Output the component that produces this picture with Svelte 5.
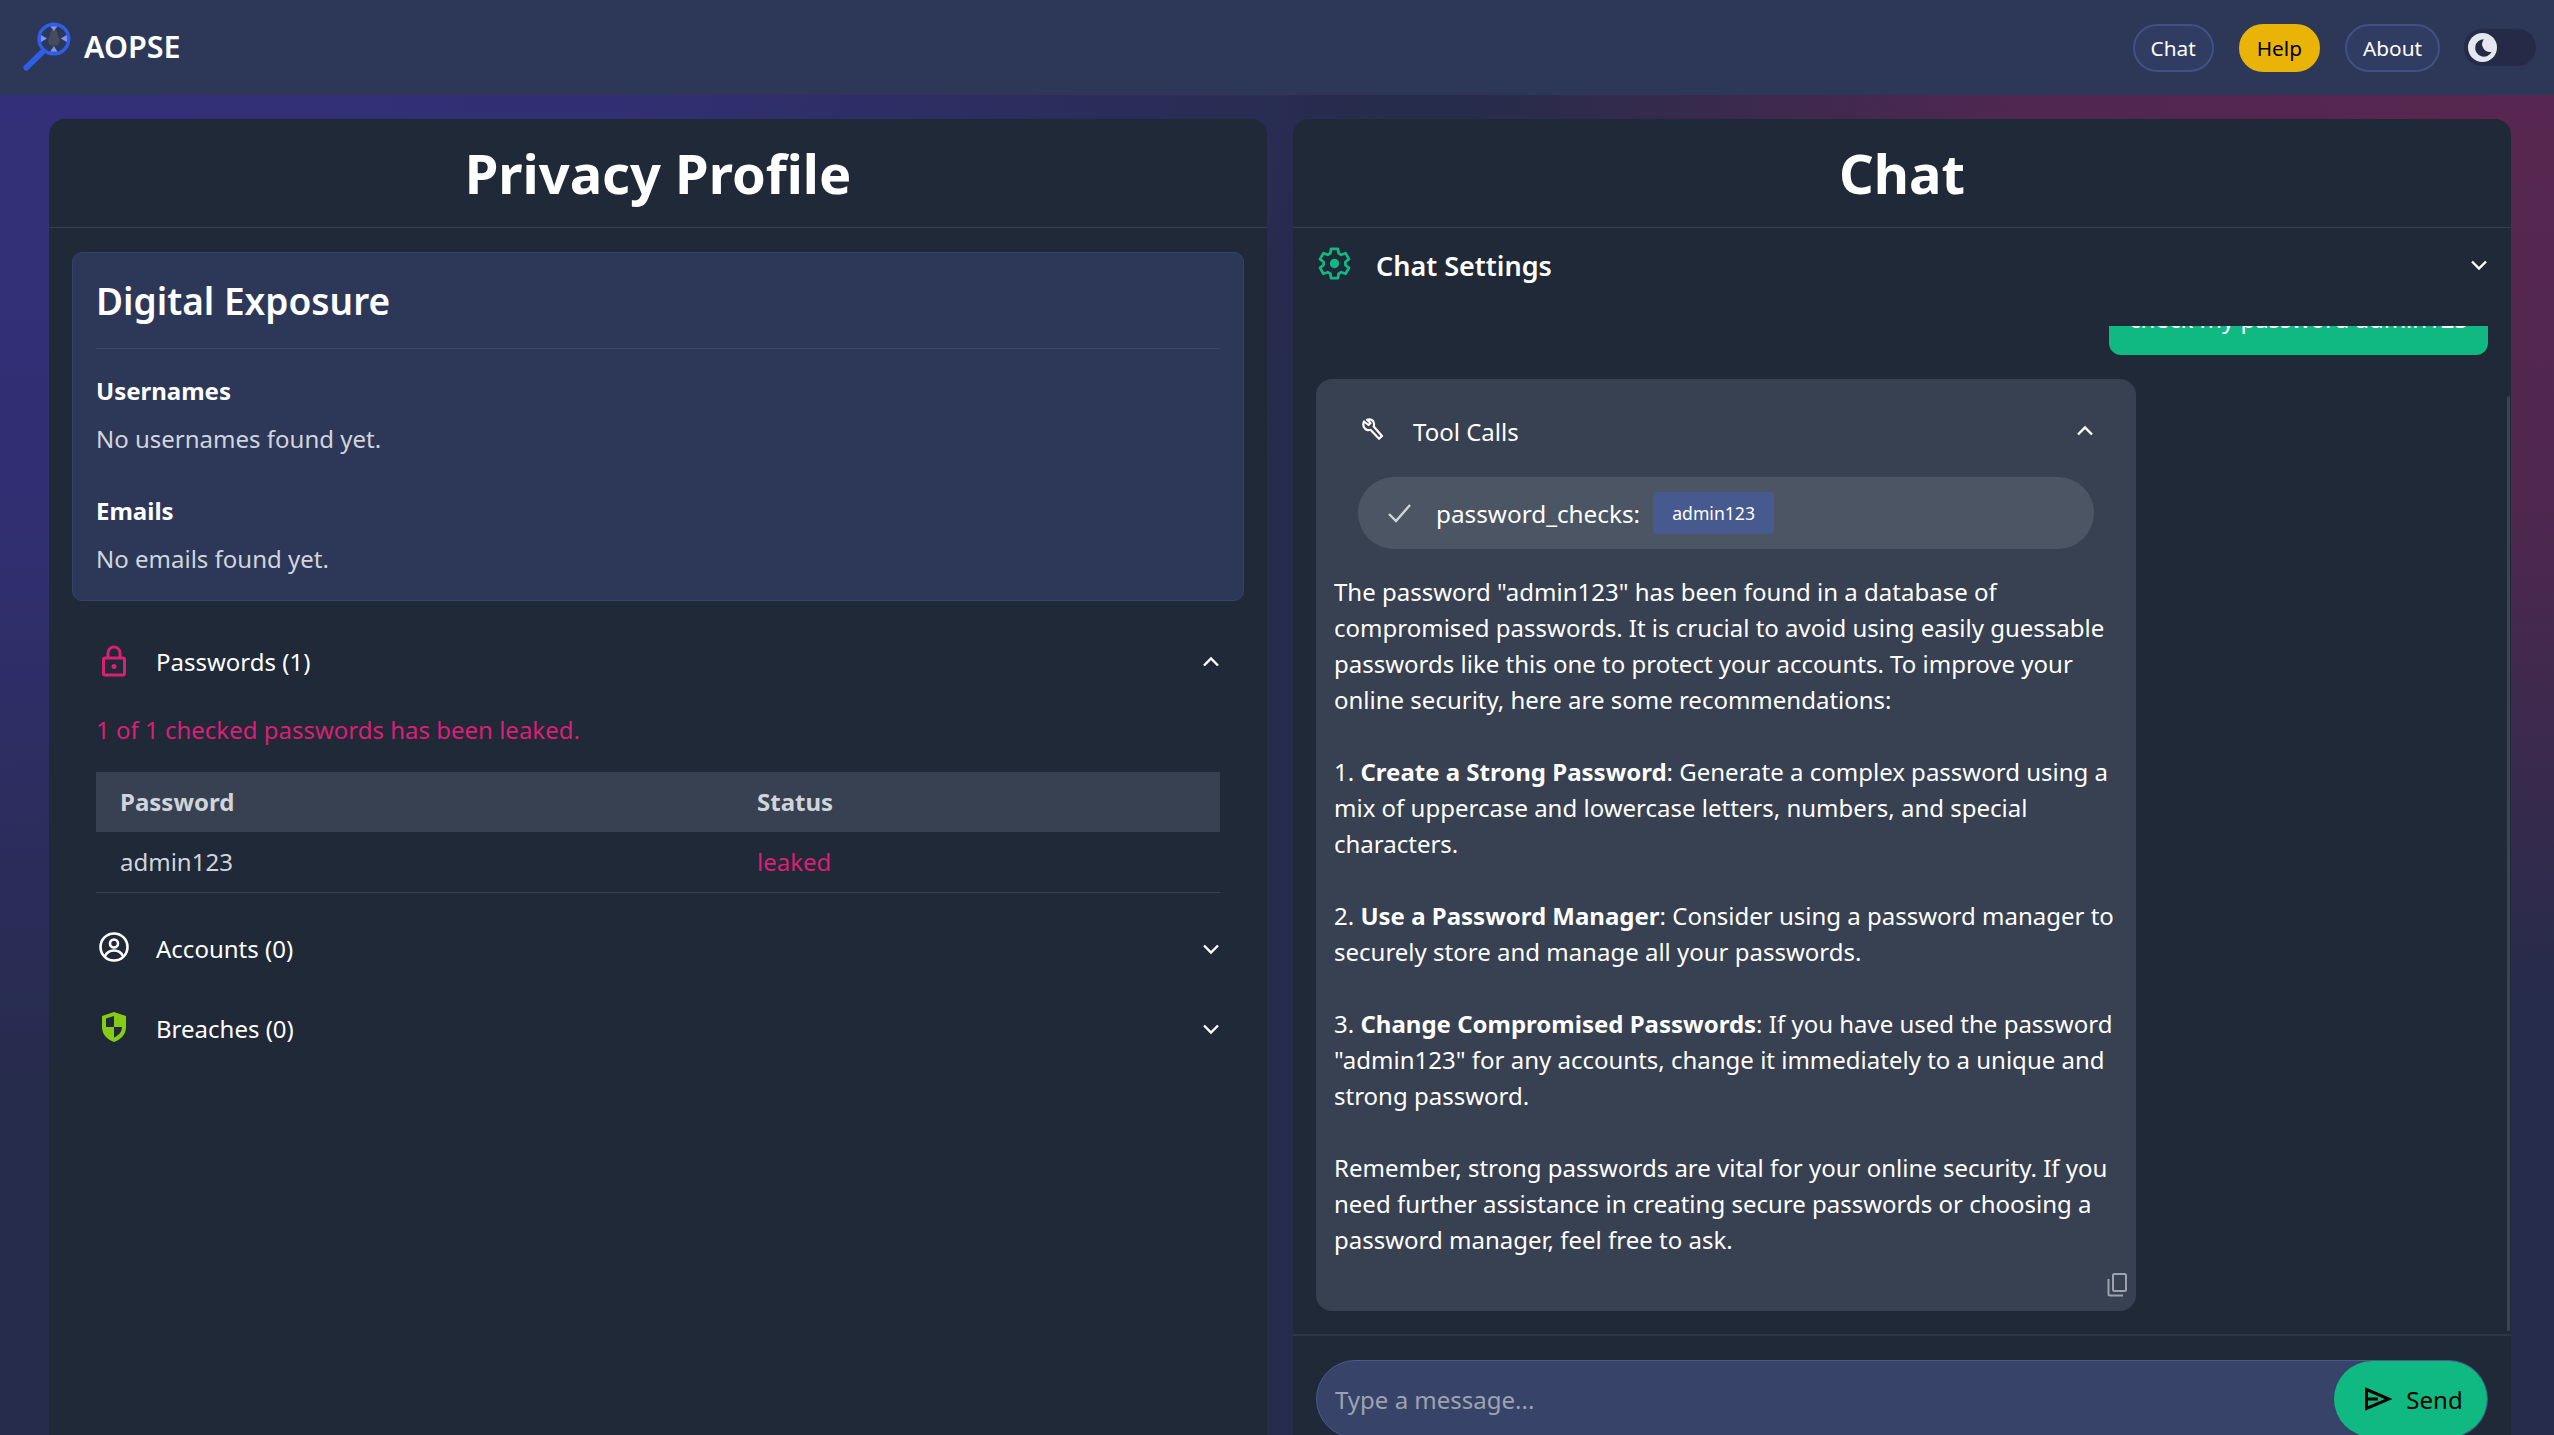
<script>
  const paragraphs = [
    ['The password "admin123" has been found in a database of compromised passwords. It is crucial to avoid using easily guessable passwords like this one to protect your accounts. To improve your online security, here are some recommendations:'],
    ['1. ', 'Create a Strong Password', ': Generate a complex password using a mix of uppercase and lowercase letters, numbers, and special characters.'],
    ['2. ', 'Use a Password Manager', ': Consider using a password manager to securely store and manage all your passwords.'],
    ['3. ', 'Change Compromised Passwords', ': If you have used the password "admin123" for any accounts, change it immediately to a unique and strong password.'],
    ['Remember, strong passwords are vital for your online security. If you need further assistance in creating secure passwords or choosing a password manager, feel free to ask.']
  ];

  // Six-toothed cog outline, teeth pointing up, down and to the four diagonals.
  function cogPath() {
    const pts = [];
    for (let i = 0; i < 6; i++) {
      const a = -90 + i * 60;
      for (const [off, r] of [[-22, 8], [-13, 11], [13, 11], [22, 8]]) {
        const t = ((a + off) * Math.PI) / 180;
        pts.push(`${(12 + r * Math.cos(t)).toFixed(2)} ${(12 + r * Math.sin(t)).toFixed(2)}`);
      }
    }
    return 'M' + pts.join('L') + 'Z';
  }
  const cog = cogPath();
</script>

<div class="page">
  <nav class="navbar">
    <div class="brand">
      <svg class="logo" viewBox="0 0 50 50" width="53" height="53" aria-hidden="true">
        <line x1="5" y1="44" x2="20" y2="29.500" stroke="#2f5fe8" stroke-width="5.500" stroke-linecap="round"/>
        <path d="M31 8c-2.600 0-3.600 3-3.600 5l-2 6 2 4h7.200l2-4-2-6c0-2-1-5-3.600-5z" fill="#454c5e"/>
        <polygon points="27.500,5 34.500,5 31,9.500" fill="#7b94f5"/>
        <polygon points="27.500,29 34.500,29 31,23.500" fill="#7b94f5"/>
        <polygon points="18.500,13 18.500,20 24.500,16.500" fill="#7b94f5"/>
        <polygon points="43.500,13 43.500,20 37.500,16.500" fill="#7b94f5"/>
        <circle cx="31" cy="17" r="14" fill="none" stroke="#2f5fe8" stroke-width="3.200"/>
      </svg>
      <span class="brand-name">AOPSE</span>
    </div>
    <div class="nav-actions">
      <button class="nav-btn">Chat</button>
      <button class="nav-btn help">Help</button>
      <button class="nav-btn">About</button>
      <div class="toggle">
        <span class="knob">
          <svg viewBox="0 0 24 24" width="22" height="22" aria-hidden="true"><path d="M13 2.500a9.500 9.500 0 1 0 8.500 13.600A8.500 8.500 0 0 1 13 2.500z" fill="#252b47"/></svg>
        </span>
      </div>
    </div>
  </nav>

  <main class="main">
    <section class="panel">
      <header class="panel-head"><h1>Privacy Profile</h1></header>
      <div class="profile-body">
        <div class="exposure">
          <h2>Digital Exposure</h2>
          <h3>Usernames</h3>
          <p>No usernames found yet.</p>
          <h3 class="second">Emails</h3>
          <p>No emails found yet.</p>
        </div>

        <div class="acc-row first">
          <svg class="acc-icon" viewBox="0 0 30 32" width="30" height="32" aria-hidden="true">
            <rect x="4.500" y="13" width="21" height="17" rx="1.500" fill="none" stroke="#db1f75" stroke-width="3"/>
            <path d="M9 13V8a6 6 0 0 1 12 0v5" fill="none" stroke="#db1f75" stroke-width="3"/>
            <circle cx="15" cy="21.500" r="2.500" fill="#db1f75"/>
          </svg>
          <span class="acc-label">Passwords (1)</span>
          <svg class="chev" viewBox="0 0 18 12" width="18" height="12" aria-hidden="true"><path d="M2 9.500l7-7 7 7" fill="none" stroke="#fff" stroke-width="2.400"/></svg>
        </div>
        <div class="acc-content">
          <p class="leak">1 of 1 checked passwords has been leaked.</p>
          <table>
            <thead><tr><th class="col-a">Password</th><th>Status</th></tr></thead>
            <tbody><tr><td>admin123</td><td class="leaked">leaked</td></tr></tbody>
          </table>
        </div>
        <div class="acc-row accounts">
          <svg class="acc-icon" viewBox="0 0 30 30" width="30" height="30" aria-hidden="true">
            <circle cx="15" cy="15" r="13.500" fill="none" stroke="#fff" stroke-width="2.600"/>
            <circle cx="15" cy="11.500" r="4" fill="none" stroke="#fff" stroke-width="2.600"/>
            <path d="M6 24c2-4 5.500-5.500 9-5.500s7 1.500 9 5.500" fill="none" stroke="#fff" stroke-width="2.600"/>
          </svg>
          <span class="acc-label">Accounts (0)</span>
          <svg class="chev" viewBox="0 0 18 12" width="18" height="12" aria-hidden="true"><path d="M2 2.500l7 7 7-7" fill="none" stroke="#fff" stroke-width="2.400"/></svg>
        </div>
        <div class="acc-row breaches">
          <svg class="acc-icon" viewBox="0 0 30 30" width="30" height="30" aria-hidden="true">
            <path d="M15 0l12 4v11c0 7.500-5.500 12.500-12 15C8.500 27.500 3 22.500 3 15V4z" fill="#84cc16"/>
            <path d="M15 4v11H7V6.500zM15 15h8c0 5-3.500 8.500-8 10.500z" fill="#1f2937"/>
          </svg>
          <span class="acc-label">Breaches (0)</span>
          <svg class="chev" viewBox="0 0 18 12" width="18" height="12" aria-hidden="true"><path d="M2 2.500l7 7 7-7" fill="none" stroke="#fff" stroke-width="2.400"/></svg>
        </div>
      </div>
    </section>

    <section class="panel">
      <header class="panel-head"><h1>Chat</h1></header>
      <div class="settings">
        <svg class="gear" viewBox="0 0 24 24" width="33" height="33" aria-hidden="true">
          <path d={cog} fill="none" stroke="#10b981" stroke-width="2" stroke-linejoin="round"/>
          <circle cx="12" cy="12" r="3.400" fill="#10b981"/>
        </svg>
        <span class="settings-label">Chat Settings</span>
        <svg class="chev" viewBox="0 0 18 12" width="18" height="12" aria-hidden="true"><path d="M2 2.500l7 7 7-7" fill="none" stroke="#fff" stroke-width="2.400"/></svg>
      </div>

      <div class="messages">
        <div class="bubble">check my password admin123</div>
        <article class="reply">
          <div class="tool-head">
            <svg viewBox="0 0 24 26" width="24" height="26" aria-hidden="true">
              <path d="M3 3.500l4.500 3.500 2-2L6 1.800C9 .5 12.500 2 13 5.500c.2 1.200 0 2-.3 3l8.300 9.500-3 2.800-8.500-9c-1 .4-2 .5-3 .3C3 11 1.300 7.500 3 3.500z" fill="none" stroke="#fff" stroke-width="2.200" stroke-linejoin="round"/>
            </svg>
            <span class="tool-label">Tool Calls</span>
            <svg class="chev" viewBox="0 0 18 12" width="18" height="12" aria-hidden="true"><path d="M2 9.500l7-7 7 7" fill="none" stroke="#fff" stroke-width="2.400"/></svg>
          </div>
          <div class="pill">
            <svg viewBox="0 0 26 22" width="26" height="22" aria-hidden="true"><path d="M2 12l7 7L23 3" fill="none" stroke="#d1d5db" stroke-width="2.400"/></svg>
            <span class="pill-name">password_checks:</span>
            <span class="badge">admin123</span>
          </div>
          <div class="reply-text">
            {#each paragraphs as p}
              <p>
                {#if p.length === 1}{p[0]}{:else}{p[0]}<strong>{p[1]}</strong>{p[2]}{/if}
              </p>
            {/each}
          </div>
          <svg class="copy" viewBox="0 0 20 24" width="20" height="24" aria-hidden="true">
            <rect x="6" y="1" width="13" height="17" rx="1.500" fill="none" stroke="#9ca3af" stroke-width="2"/>
            <path d="M1.500 6v15a1.500 1.500 0 0 0 1.500 1.500h13" fill="none" stroke="#9ca3af" stroke-width="2"/>
          </svg>
        </article>
        <span class="scrollbar"></span>
      </div>

      <footer class="composer">
        <div class="input">
          <span class="placeholder">Type a message...</span>
          <button class="send">
            <svg viewBox="0 0 28 24" width="28" height="24" aria-hidden="true"><path d="M2.500 2.500L25 12 2.500 21.500zM2.500 12H14" fill="none" stroke="#000" stroke-width="3" stroke-linejoin="miter"/></svg>
            Send
          </button>
        </div>
      </footer>
    </section>
  </main>
</div>

<style>
  :global(body) {
    margin: 0;
    background: #262c4b;
    overflow: hidden;
  }
  .page {
    width: 2554px;
    height: 1435px;
    overflow: hidden;
    display: flex;
    flex-direction: column;
    color: #fff;
    font-family: "Noto Sans", "Open Sans", sans-serif;
    font-size: 24px;
    background:
      radial-gradient(ellipse 1400px 1100px at 0% 0%, #33307a 0%, rgba(51,48,122,0.85) 45%, rgba(38,44,75,0) 100%),
      radial-gradient(ellipse 1100px 1000px at 100% 0%, #5a2650 0%, rgba(90,38,80,0.8) 50%, rgba(38,44,75,0) 100%),
      #262c4b;
  }
  button { font-family: inherit; cursor: pointer; }

  .navbar {
    height: 95px;
    flex: none;
    box-sizing: border-box;
    background: #2d3858;
    display: flex;
    align-items: center;
    justify-content: space-between;
    padding: 0 17px 0 21px;
  }
  .brand { display: flex; align-items: center; gap: 10px; }
  .logo { display: block; }
  .brand-name { font-size: 30.500px; font-weight: 600; line-height: 40px; margin-top: -3px; }
  .nav-actions { display: flex; align-items: center; gap: 25px; }
  .nav-btn {
    height: 48px;
    box-sizing: border-box;
    padding: 0 16px;
    border-radius: 24px;
    border: 2px solid #425082;
    background: #303c62;
    color: #fff;
    font-size: 20.800px;
  }
  .nav-btn.help { background: #eab308; border-color: #eab308; color: #000; }
  .toggle {
    width: 74px;
    height: 39px;
    margin-left: -2px;
    box-sizing: border-box;
    border-radius: 20px;
    background: #252b47;
    border: 1px solid #2e3655;
    display: flex;
    align-items: center;
    padding-left: 4px;
  }
  .knob {
    width: 29px;
    height: 29px;
    border-radius: 50%;
    background: #e5e7ef;
    display: flex;
    align-items: center;
    justify-content: center;
  }

  .main {
    flex: 1;
    min-height: 0;
    display: grid;
    grid-template-columns: 1218px 1218px;
    gap: 26px;
    padding: 24px 43px 0 49px;
  }
  .panel {
    height: 1360px;
    background: #1f2937;
    border-radius: 16px 16px 0 0;
    display: flex;
    flex-direction: column;
  }
  .panel-head {
    height: 108px;
    flex: none;
    border-bottom: 1px solid #374151;
    display: flex;
    align-items: center;
    justify-content: center;
  }
  h1 { margin: 0; font-size: 54.200px; font-weight: 700; line-height: 70px; }

  .profile-body { padding: 24px 23px 0; }
  .exposure {
    height: 349px;
    box-sizing: border-box;
    background: #2d3858;
    border: 1px solid #364268;
    border-radius: 10px;
    padding: 24px 23px;
  }
  h2 {
    margin: 0 0 24px;
    padding-bottom: 23px;
    border-bottom: 1px solid #3b4770;
    font-size: 37px;
    font-weight: 600;
    line-height: 48px;
  }
  h3 { margin: 0; font-size: 24px; font-weight: 700; line-height: 36px; }
  h3.second { margin-top: 36px; }
  .exposure p { margin: 12px 0 0; line-height: 36px; color: #d1d5db; }

  .acc-row {
    display: flex;
    align-items: center;
    height: 80px;
    padding: 0 0 0 27px;
  }
  .acc-row.first { margin-top: 21px; }
  .acc-row.accounts { margin-top: 16px; }
  .acc-icon { flex: none; display: block; margin-top: -3px; }
  .acc-label { margin-left: 27px; line-height: 36px; }
  .acc-row .chev { margin-left: auto; margin-right: 24px; }
  .chev { display: block; flex: none; }

  .acc-content { padding: 0 24px; margin-top: 10px; }
  .leak { margin: 0 0 24px; color: #db1f75; line-height: 36px; }
  table { width: 100%; border-collapse: collapse; table-layout: fixed; }
  th {
    background: #374151;
    color: #d1d5db;
    text-align: left;
    font-weight: 700;
    height: 60px;
    padding: 0 24px 2px;
    box-sizing: border-box;
  }
  th.col-a { width: 637px; }
  td {
    height: 60px;
    padding: 0 24px 1px;
    box-sizing: border-box;
    color: #d1d5db;
    border-bottom: 1px solid #374151;
  }
  td.leaked { color: #db1f75; }

  .settings {
    flex: none;
    display: flex;
    align-items: center;
    height: 74px;
    margin-bottom: 24px;
    padding: 0 23px 0 25px;
  }
  .gear { margin-top: -4px; }
  .settings-label { margin-left: 25px; font-size: 27px; font-weight: 600; }
  .settings .chev { margin-left: auto; }

  .messages {
    position: relative;
    flex: none;
    height: 1010px;
    overflow: hidden;
    padding: 0 23px;
    box-sizing: border-box;
    border-bottom: 2px solid #2c3645;
  }
  .bubble {
    width: 379px;
    height: 72px;
    margin: -43px 0 24px auto;
    box-sizing: border-box;
    padding: 18px 20px;
    background: #10b981;
    border-radius: 12px;
    text-align: center;
    white-space: nowrap;
    line-height: 36px;
  }
  .reply {
    position: relative;
    width: 820px;
    height: 932px;
    box-sizing: border-box;
    background: #374151;
    border-radius: 16px;
    padding: 0 18px;
  }
  .tool-head {
    display: flex;
    align-items: center;
    height: 98px;
    box-sizing: border-box;
    padding: 6px 24px 0 27px;
  }
  .tool-label { margin-left: 28px; }
  .tool-head .chev { margin-left: auto; }
  .pill {
    display: flex;
    align-items: center;
    height: 72px;
    width: 736px;
    box-sizing: border-box;
    margin-left: 24px;
    border-radius: 36px;
    background: #4b5563;
    padding-left: 29px;
  }
  .pill-name { margin-left: 23px; font-size: 24.300px; }
  .badge {
    margin-left: 13px;
    width: 121px;
    height: 42px;
    display: flex;
    align-items: center;
    justify-content: center;
    background: #475a8f;
    border-radius: 4px;
    font-size: 17.600px;
  }
  .reply-text { margin-top: 25px; line-height: 36px; }
  .reply-text p { margin: 0 0 36px; }
  .reply-text strong { font-weight: 700; }
  .copy { position: absolute; right: 9px; bottom: 14px; display: block; }
  .scrollbar {
    position: absolute;
    right: 1px;
    top: 70px;
    bottom: 3px;
    width: 3px;
    border-radius: 2px;
    background: #3a4452;
  }

  .composer { flex: none; padding: 24px 23px 0; }
  .input {
    position: relative;
    height: 78px;
    box-sizing: border-box;
    background: #374369;
    border: 1px solid #4a5a8c;
    border-radius: 39px;
    display: flex;
    align-items: center;
    padding-left: 18px;
  }
  .placeholder { color: #9ca3af; }
  .send {
    position: absolute;
    right: 0;
    top: 0;
    width: 153px;
    height: 76px;
    border: none;
    border-radius: 38px;
    background: #10b981;
    color: #000;
    font-size: 24px;
    display: flex;
    align-items: center;
    justify-content: center;
    gap: 14px;
    padding-left: 12px;
  }
</style>
